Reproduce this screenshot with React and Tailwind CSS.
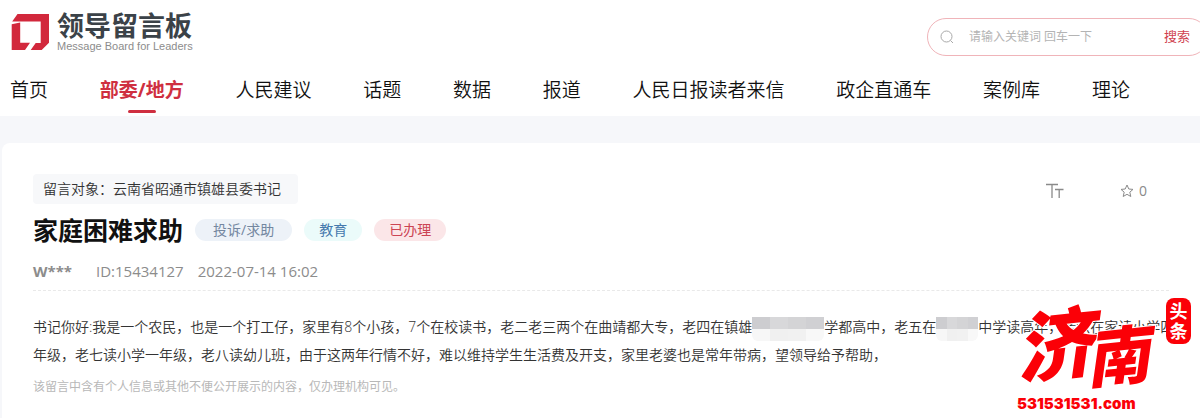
import React from "react";

const NAV = [
  { label: "首页" },
  { label: "部委/地方", active: true },
  { label: "人民建议" },
  { label: "话题" },
  { label: "数据" },
  { label: "报道" },
  { label: "人民日报读者来信" },
  { label: "政企直通车" },
  { label: "案例库" },
  { label: "理论" },
];

function LogoMark() {
  return (
    <svg width="40" height="40" viewBox="0 0 40 40" aria-hidden="true" className="shrink-0">
      <path fill="#d2283c" d="M7.5 2H39V30.7L31.7 38H20.7L25.7 31H30.7V9.6H2.2Z" />
      <path fill="#d2283c" d="M1.7 12.2L10.2 10.6V30.7H20L15 38H1.7Z" />
    </svg>
  );
}

function Header() {
  return (
    <header className="bg-white">
      <div className="flex items-start justify-between pl-[10px]">
        <a href="#" className="flex items-start gap-[7px] pt-3">
          <LogoMark />
          <span className="flex flex-col">
            <span className="text-[27px] leading-[28px] font-bold text-[#3b4248]">领导留言板</span>
            <span className="text-[11px] leading-[12px] text-[#8c8c8c] font-['Liberation_Sans',sans-serif]">
              Message Board for Leaders
            </span>
          </span>
        </a>
        <form
          className="mt-[18px] -mr-2 flex h-[38px] w-[281px] items-center rounded-full border border-[#f0b4b9] pr-[17px] pl-3"
          onSubmit={(e) => e.preventDefault()}
        >
          <svg width="14" height="14" viewBox="0 0 14 14" fill="none" stroke="#a9a9a9" aria-hidden="true">
            <circle cx="6.5" cy="6.5" r="5.5" />
            <path d="M10.5 10.5L13 13" />
          </svg>
          <input
            type="text"
            aria-label="搜索关键词"
            placeholder="请输入关键词 回车一下"
            className="ml-[15px] min-w-0 flex-1 bg-transparent text-xs outline-none placeholder:text-[#b4b4b4]"
          />
          <button type="submit" className="text-[13px] text-[#d0414f]">
            搜索
          </button>
        </form>
      </div>
      <nav className="flex h-[60px] items-start justify-between pt-5 pr-[70px] pl-[10px]">
        {NAV.map((item) => (
          <a
            key={item.label}
            href="#"
            className={
              item.active
                ? "flex flex-col items-center text-[19px] leading-[28px] font-bold text-[#cf2f40]"
                : "text-[19px] leading-[28px] font-[350] text-[#111111]"
            }
          >
            {item.label}
            {item.active && <span className="mt-[6px] h-[3px] w-7 rounded-full bg-[#cf2f40]" />}
          </a>
        ))}
      </nav>
    </header>
  );
}

function Mosaic({ className }) {
  return (
    <span aria-hidden="true" className={"mt-1 inline-grid h-6 shrink-0 grid-cols-4 overflow-hidden rounded-b-md " + className}>
      <span className="bg-[#cdcdd0]" />
      <span className="bg-[#d8d8da]" />
      <span className="bg-[#d4d4d6]" />
      <span className="bg-[#d0d0d3]" />
      <span className="bg-[#f7f7f7]" />
      <span className="bg-[#f0f0f0]" />
      <span className="bg-[#f1f1f1]" />
      <span className="bg-[#f8f8f8]" />
    </span>
  );
}

function Watermark() {
  return (
    <div className="pointer-events-none absolute top-[298px] right-[9px] w-[176px] text-[#fb0007]">
      <div className="flex items-start">
        <span className="-rotate-6 text-[78px] leading-[92px] font-black italic [-webkit-text-stroke:2px_white] [paint-order:stroke_fill]">
          济
        </span>
        <span className="mt-6 -ml-2 -rotate-6 text-[64px] leading-[68px] font-black italic [-webkit-text-stroke:2px_white] [paint-order:stroke_fill]">
          南
        </span>
      </div>
      <span className="absolute top-0 right-0 flex h-[46px] w-[25px] flex-col items-center justify-center rounded-lg bg-[#fb0007] text-lg leading-[20px] font-bold text-white">
        <span>头</span>
        <span>条</span>
      </span>
      <div className="mt-1 pl-[2px] text-[15px] leading-[20px] font-black font-['Inter',sans-serif]">531531531.com</div>
    </div>
  );
}

export default function App() {
  return (
    <div className="relative min-h-screen overflow-hidden bg-[#f6f7fa] font-['Open_Sans','Noto_Sans_CJK_SC',sans-serif]">
      <Header />
      <main className="mt-[27px] ml-[2px] rounded-tl-lg bg-white px-[31px] pt-[31px] pb-8">
        <div className="flex items-start justify-between">
          <div className="flex h-[30px] items-center rounded-sm bg-[#f7f8fa] pr-[17px] pl-[10px] text-sm font-[350] text-[#333333]">
            留言对象：云南省昭通市镇雄县委书记
          </div>
          <div className="flex h-[34px] items-center gap-14 pr-[22px] text-[#8a8a8a]">
            <button type="button" aria-label="字号">
              <svg width="18" height="16" viewBox="0 0 18 16" fill="none" stroke="currentColor" strokeWidth="1.3" aria-hidden="true">
                <path d="M0 1.5H12M6 1.5V15M9 6.5H17.5M13.2 6.5V15" />
              </svg>
            </button>
            <button type="button" aria-label="收藏" className="flex items-center gap-[5px] text-sm">
              <svg width="14" height="14" viewBox="0 0 14 14" fill="none" stroke="currentColor" strokeLinejoin="round" aria-hidden="true">
                <path d="M7 1L8.8 5L13 5.4L9.8 8.2L10.8 12.5L7 10.3L3.2 12.5L4.2 8.2L1 5.4L5.2 5Z" />
              </svg>
              0
            </button>
          </div>
        </div>
        <div className="mt-1 flex items-center">
          <h1 className="text-[25px] leading-[36px] font-bold text-[#111111]">家庭困难求助</h1>
          <div className="ml-3 flex gap-3 text-sm leading-[22px]">
            <span className="rounded-full bg-[#edf2f8] px-[18px] text-[#7487a0]">投诉/求助</span>
            <span className="rounded-full bg-[#ebfbfa] px-[15px] text-[#4579ad]">教育</span>
            <span className="rounded-full bg-[#fbe6e8] px-[15px] text-[#cc4453]">已办理</span>
          </div>
        </div>
        <div className="mt-3 flex text-[15px] leading-[22px] text-[#8c8c8c]">
          <span className="font-bold">W***</span>
          <span className="ml-6">ID:15434127</span>
          <span className="ml-[14px]">2022-07-14 16:02</span>
        </div>
        <div className="mt-2 border-t border-dashed border-[#e9e9e9]" />
        <p className="mt-[22px] text-sm leading-[28px] font-[350] whitespace-nowrap text-[#333333]">
          <span className="flex items-center">
            书记你好:我是一个农民，也是一个打工仔，家里有8个小孩，7个在校读书，老二老三两个在曲靖都大专，老四在镇雄
            <Mosaic className="w-[72px]" />
            学都高中，老五在
            <Mosaic className="w-[42px]" />
            中学读高年，老六在家读小学四
          </span>
          年级，老七读小学一年级，老八读幼儿班，由于这两年行情不好，难以维持学生生活费及开支，家里老婆也是常年带病，望领导给予帮助，
        </p>
        <p className="mt-2 text-xs leading-[20px] text-[#b8b8b8]">
          该留言中含有个人信息或其他不便公开展示的内容，仅办理机构可见。
        </p>
      </main>
      <Watermark />
    </div>
  );
}
